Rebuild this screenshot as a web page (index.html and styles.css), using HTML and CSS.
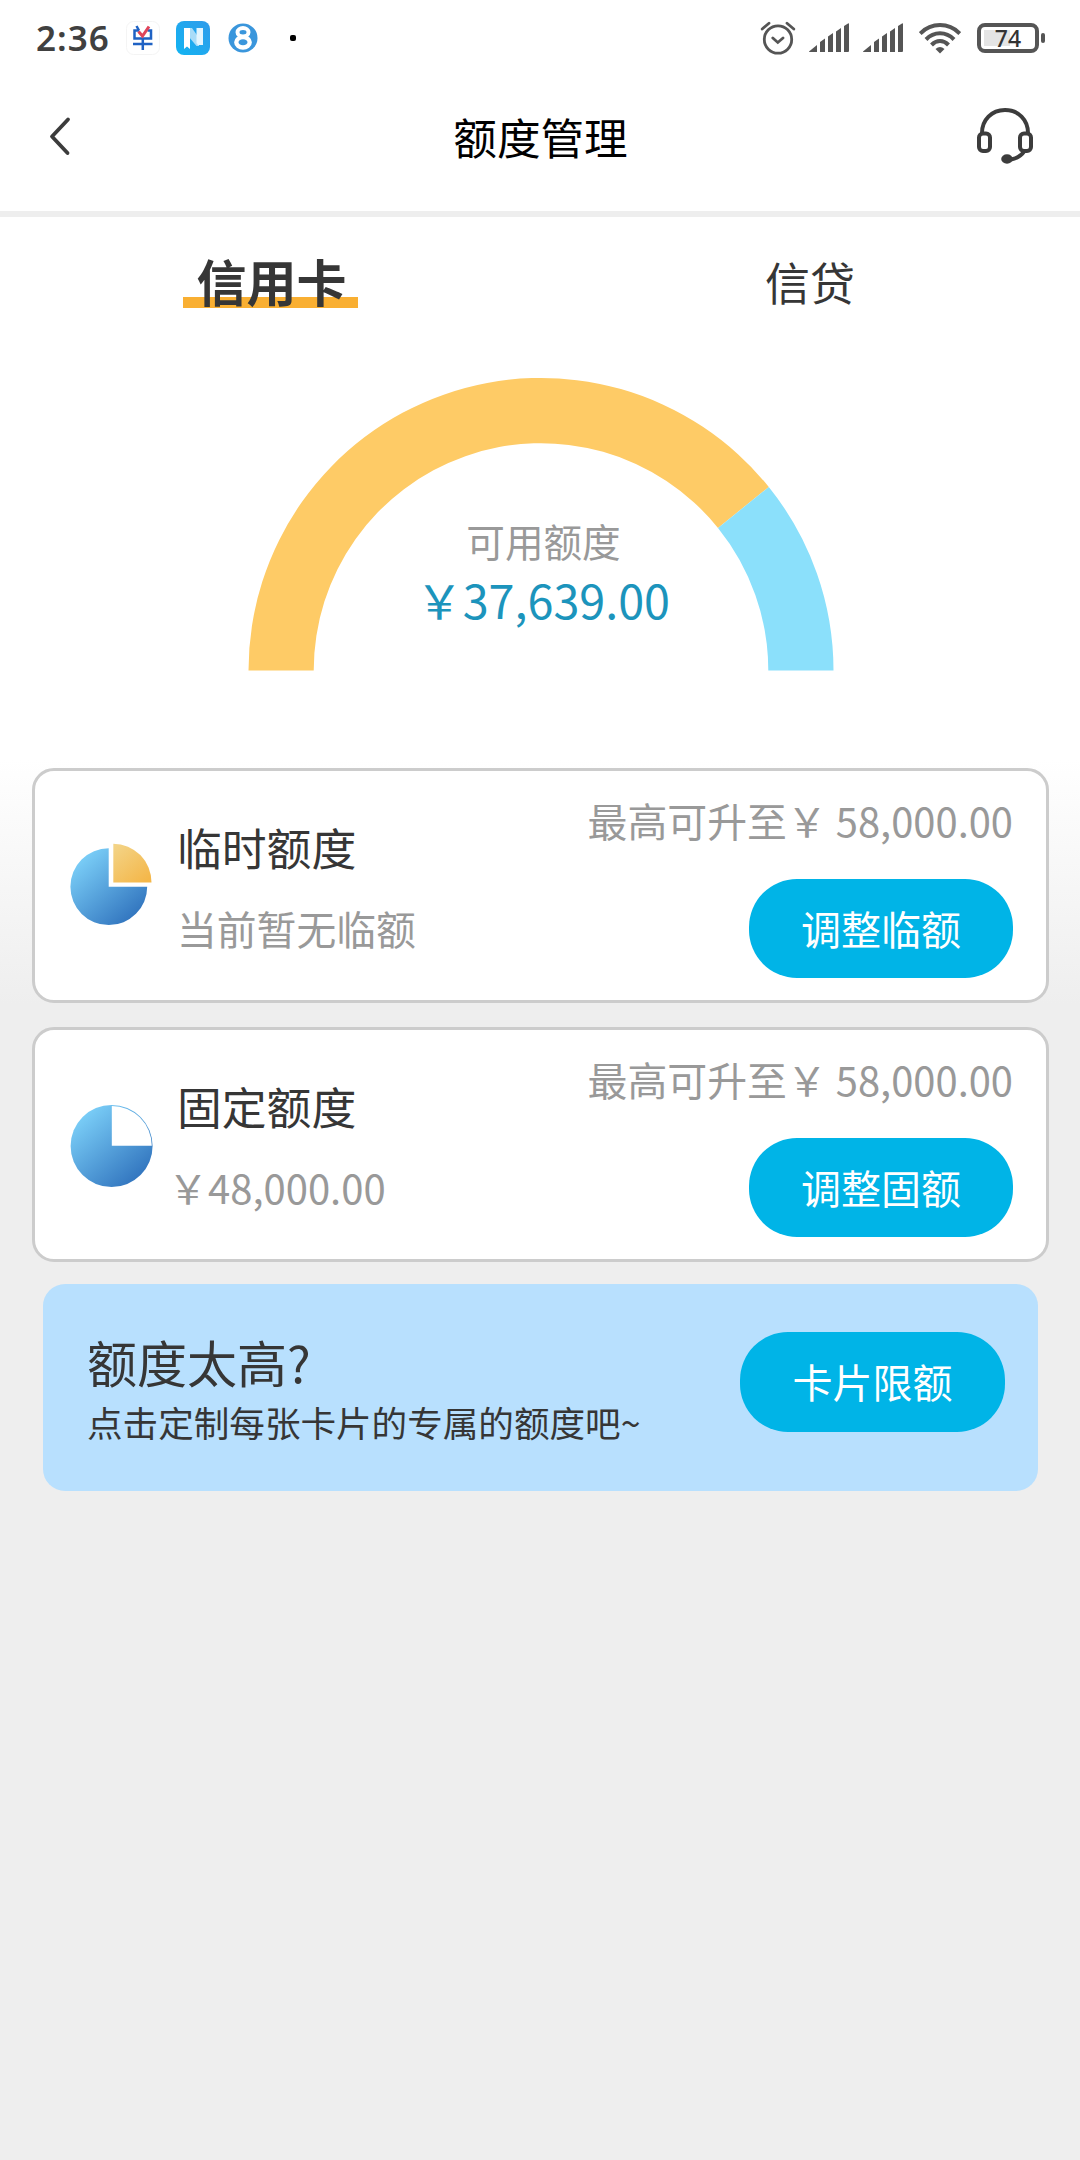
FILE: index.html
```html
<!DOCTYPE html>
<html lang="zh-CN">
<head>
<meta charset="utf-8">
<title>额度管理</title>
<link rel="stylesheet" href="styles.css">
</head>
<body>
<div class="page">
  <div class="status">
    <span class="clock">2:36</span>
    <svg class="ico-list" width="34" height="34" viewBox="0 0 34 34" fill="none">
      <rect x=".5" y=".5" width="33" height="33" rx="7" stroke="#f4f4f4"/>
      <path d="M13 9.500H8.500V17.500H25V9.500H21.500M10.500 5l2.500 4.500M7 23H26.500M16.800 17.500V29" stroke="#1f62c4" stroke-width="2.500"/>
      <path d="M12.500 10.500L16.500 15L23 5.500" stroke="#e0455a" stroke-width="3"/>
    </svg>
    <svg class="ico-n" width="34" height="34" viewBox="0 0 34 34">
      <defs><linearGradient id="nb" x1="1" y1="0" x2="0" y2="1"><stop offset="0" stop-color="#2f9bea"/><stop offset="1" stop-color="#12b4f2"/></linearGradient></defs>
      <rect width="34" height="34" rx="8" fill="url(#nb)"/>
      <path d="M13 7H16L23 17V25H20.500L13 16Z" fill="#a9dcf8"/>
      <path d="M8 7H14V28L11 25.500L8 28Z" fill="#fff"/>
      <path d="M20.500 7H27V24H22L20.500 22Z" fill="#e4f5fe"/>
    </svg>
    <svg class="ico-8" width="30" height="30" viewBox="0 0 30 30" fill="none">
      <circle cx="15" cy="15" r="14.500" fill="#3a96dc"/>
      <ellipse cx="15" cy="9.300" rx="5.500" ry="4.200" stroke="#fff" stroke-width="4"/>
      <ellipse cx="15" cy="19.300" rx="6.700" ry="5.200" stroke="#fff" stroke-width="4.400"/>
    </svg>
    <span class="dot"></span>
    <svg class="ico-alarm" width="36" height="36" viewBox="0 0 36 36" fill="none" stroke="#555" stroke-width="2.800" stroke-linecap="round">
      <circle cx="18" cy="19.500" r="13.700"/>
      <path d="M12.800 18L17.800 22.500L23 18M2.200 9L9 3.200M33.800 9L27 3.200"/>
    </svg>
    <svg class="ico-signal" width="40" height="30" viewBox="0 0 40 30" fill="#555">
      <path d="M0 28.500L8 22V29H1Q0 29 0 28.500ZM11 19L16 15.500V29H11ZM19 13.500L24 10V29H19ZM27 8.500L32 5V29H27ZM35 3L39 .5Q40 0 40 1V28Q40 29 39 29H35Z"/>
    </svg>
    <svg class="ico-signal2" width="40" height="30" viewBox="0 0 40 30" fill="#555">
      <path d="M0 28.500L8 22V29H1Q0 29 0 28.500ZM11 19L16 15.500V29H11ZM19 13.500L24 10V29H19ZM27 8.500L32 5V29H27ZM35 3L39 .5Q40 0 40 1V28Q40 29 39 29H35Z"/>
    </svg>
    <svg class="ico-wifi" width="42" height="31" viewBox="0 0 42 31" fill="none" stroke="#555" stroke-width="4">
      <path d="M1.200 10.500C12.500-.7 29.500-.7 40.800 10.500M7 16.500C15 8.300 27 8.300 35 16.500M12.500 22C17.500 16.800 24.500 16.800 29.500 22"/>
      <path d="M16.500 26Q21 22 25.500 26L21 30.500Z" fill="#555" stroke="none"/>
    </svg>
    <div class="battery"><span class="level">74</span></div>
    <span class="nub"></span>
  </div>

  <header class="header">
    <svg class="back" width="22" height="40" viewBox="0 0 22 40" fill="none" stroke="#3c3c3c" stroke-width="3.800" stroke-linecap="round" stroke-linejoin="round"><path d="M19 3.500L3 20.500L18.500 37"/></svg>
    <h1 class="title">额度管理</h1>
    <svg class="service" width="56" height="56" viewBox="0 0 56 56" fill="none" stroke="#3c3c3c" stroke-width="4">
      <path d="M5 25C5 12 14.500 2 28 2S51 12 51 25"/>
      <rect x="2" y="25.500" width="11" height="17.500" rx="4"/>
      <rect x="43" y="25.500" width="11" height="17.500" rx="4"/>
      <path d="M47.500 43C44.500 47.500 40 50.500 34 51.500"/>
      <ellipse cx="30" cy="51" rx="5.800" ry="4.700" fill="#3c3c3c" stroke="none"/>
    </svg>
  </header>

  <nav class="tabs">
    <div class="tab"><span class="tab-on">信用卡</span></div>
    <div class="tab">信贷</div>
  </nav>

  <section class="gauge">
    <svg class="arc" width="586" height="294" viewBox="0 0 586 294">
      <path d="M0.500 293.500A292.500 292.500 0 0 1 520.800 110L470 150.900A227.300 227.300 0 0 0 65.700 293.500Z" fill="#fecb66"/>
      <path d="M520.800 110A292.500 292.500 0 0 1 585.500 293.500H520.300A227.300 227.300 0 0 0 470 150.900Z" fill="#8be0fb"/>
    </svg>
    <div class="gauge-text">
      <div class="gauge-label">可用额度</div>
      <div class="gauge-value">￥37,639.00</div>
    </div>
  </section>

  <main class="cards">
    <section class="card">
      <svg class="pie" width="88" height="88" viewBox="0 0 88 88">
        <defs>
          <linearGradient id="blue" x1=".15" y1=".1" x2=".85" y2=".9"><stop offset="0" stop-color="#7bcff8"/><stop offset="1" stop-color="#3174be"/></linearGradient>
          <linearGradient id="gold" x1="0" y1="0" x2=".8" y2="1"><stop offset="0" stop-color="#f3d58a"/><stop offset="1" stop-color="#f4b74a"/></linearGradient>
        </defs>
        <path d="M40.700 45.700V7.300A38.400 38.400 0 1 0 79.200 45.700Z" fill="url(#blue)"/>
        <path d="M45.300 2.700A38.300 38.700 0 0 1 83.500 41.500H45.300Z" fill="url(#gold)"/>
      </svg>
      <div class="info">
        <div class="name">临时额度</div>
        <div class="sub">当前暂无临额</div>
      </div>
      <div class="side">
        <div class="limit">最高可升至￥ 58,000.00</div>
        <div class="btn">调整临额</div>
      </div>
    </section>

    <section class="card">
      <svg class="pie" width="88" height="88" viewBox="0 0 88 88">
        <circle cx="43.600" cy="46" r="41" fill="url(#blue)"/>
        <path d="M43.800 6A40 40 0 0 1 83.800 45.700H43.800Z" fill="#fff"/>
      </svg>
      <div class="info">
        <div class="name">固定额度</div>
        <div class="sub money">￥48,000.00</div>
      </div>
      <div class="side">
        <div class="limit">最高可升至￥ 58,000.00</div>
        <div class="btn">调整固额</div>
      </div>
    </section>

    <section class="promo">
      <div class="promo-text">
        <div class="promo-title">额度太高?</div>
        <div class="promo-sub">点击定制每张卡片的专属的额度吧~</div>
      </div>
      <div class="btn">卡片限额</div>
    </section>
  </main>
</div>
</body>
</html>
```
FILE: styles.css
```css
* { box-sizing: border-box; }
body {
  margin: 0;
  font-family: "Noto Sans CJK SC", sans-serif;
  color: #363636;
  background: #eee;
}
svg { display: block; flex: none; }
.page {
  width: 1080px;
  height: 2160px;
  background: linear-gradient(#fff 0, #fff 760px, #eee 1005px, #eee 100%);
}

/* status bar */
.status {
  display: flex;
  align-items: center;
  height: 76px;
  padding-left: 36px;
}
.clock {
  width: 90px;
  font: 600 35px/40px "Noto Sans", sans-serif;
  letter-spacing: 1px;
  color: #404040;
}
.ico-n { margin-left: 16px; }
.ico-8 { margin-left: 18px; }
.dot { width: 6px; height: 6px; margin-left: 32px; border-radius: 2px; background: #000; }
.ico-alarm { margin-left: auto; }
.ico-signal { margin-left: 13px; }
.ico-signal2 { margin-left: 14px; }
.ico-wifi { margin-left: 16px; }
.battery {
  width: 62px;
  height: 30px;
  margin-left: 16px;
  padding: 3px;
  border: 4px solid #555;
  border-radius: 8px;
}
.level {
  display: block;
  height: 16px;
  background: linear-gradient(90deg, #e4e4e4 26px, transparent 26px);
  font: 500 23px/17px "Noto Sans", sans-serif;
  text-align: center;
  color: #333;
}
.nub { width: 4px; height: 10px; margin: 0 35px 0 2px; border-radius: 2px; background: #555; }

/* header */
.header {
  display: flex;
  align-items: center;
  justify-content: space-between;
  height: 141px;
  padding: 1px 47px 16px 49px;
  border-bottom: 6px solid #eee;
}
.title { margin: 0; padding-left: 33px; font-size: 43.600px; font-weight: 400; line-height: 60px; color: #000; }

/* tabs */
.tabs { display: flex; height: 132px; padding-top: 32px; }
.tab { width: 540px; text-align: center; font-size: 45px; line-height: 65px; }
.tab-on {
  display: inline-block;
  height: 59px;
  padding: 0 11px 0 14px;
  font-size: 50px;
  font-weight: 700;
  line-height: 62px;
  background: linear-gradient(#f9af32, #f9af32) bottom / 100% 11px no-repeat;
}

/* gauge */
.gauge { display: grid; justify-items: center; height: 419px; padding: 28px 0 0 2px; }
.arc, .gauge-text { grid-area: 1 / 1; }
.gauge-text { padding-top: 138px; text-align: center; }
.gauge-label { padding-left: 5px; font-size: 38.600px; line-height: 50px; color: #999; }
.gauge-value { padding-left: 4px; font-size: 46.700px; line-height: 67px; color: #1c94bc; }

/* limit cards */
.cards { display: flex; flex-direction: column; gap: 24px; padding: 0 31px 0 32px; }
.card {
  display: flex;
  height: 235px;
  padding: 0 33px;
  border: 3px solid #ccc;
  border-radius: 22px;
  background: #fff;
}
.pie { margin-top: 70px; }
.info { padding: 46px 0 0 21px; }
.name { font-size: 44.800px; line-height: 60px; }
.sub { margin-top: 26px; font-size: 39.800px; line-height: 50px; color: #999; }
.money { margin-left: -9px; font-size: 40px; }
.side { display: flex; flex-direction: column; align-items: flex-end; gap: 34px; margin-left: auto; padding-top: 24px; }
.limit { font-size: 39.900px; line-height: 50px; color: #999; white-space: nowrap; }
.btn {
  width: 264px;
  height: 99px;
  border-radius: 48px;
  background: #00b4e7;
  color: #fff;
  font-size: 40px;
  line-height: 99px;
  text-align: center;
}

/* promo */
.promo {
  display: flex;
  justify-content: space-between;
  height: 207px;
  margin: -2px 11px 0 11px;
  padding: 48px 33px 0 44px;
  border-radius: 22px;
  background: #b8e0fe;
}
.promo-title { margin-top: -1px; font-size: 50px; line-height: 60px; }
.promo-sub { margin-top: 6px; font-size: 35.600px; line-height: 50px; }
.promo .btn { width: 265px; height: 100px; }
```
